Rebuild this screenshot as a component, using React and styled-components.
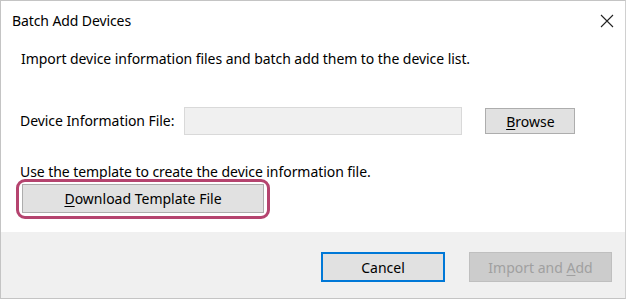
import React from 'react';
import styled, { createGlobalStyle } from 'styled-components';

const GlobalStyle = createGlobalStyle`
  body {
    margin: 0;
    background: #fff;
    font-family: "Noto Sans", "Open Sans", sans-serif;
    color: #000;
  }
`;

const Window = styled.div`
  width: 626px;
  height: 299px;
  box-sizing: border-box;
  border: 1px solid #c4c4c4;
  border-right-color: #d0d0d0;
  display: flex;
  flex-direction: column;
  background: #fff;
`;

const TitleBar = styled.div`
  height: 39px;
  display: flex;
  align-items: center;
  justify-content: space-between;
  padding: 0 10px 2px 11px;
`;

const Title = styled.div`
  font-size: 14px;
  letter-spacing: -0.1px;
`;

const CloseButton = styled.div`
  width: 14px;
  height: 14px;
  margin-right: 1px;
  display: flex;
`;

const Body = styled.div`
  flex: 1;
  display: flex;
  flex-direction: column;
  align-items: flex-start;
  padding: 7px 19px 0;
`;

const Text = styled.div`
  font-size: 14px;
  letter-spacing: -0.06px;
  line-height: ${p => p.$lh || 20}px;
  padding-left: ${p => p.$indent || 0}px;
`;

const FileRow = styled.div`
  display: flex;
  align-items: center;
  margin-top: 38px;
`;

const Input = styled.div`
  width: 276px;
  height: 26px;
  margin-left: 10px;
  background: #f0f0f0;
  border: 1px solid #d9d9d9;
`;

const Button = styled.div`
  box-sizing: border-box;
  width: ${p => p.$w}px;
  height: ${p => p.$h}px;
  display: flex;
  align-items: center;
  justify-content: center;
  font-size: 14px;
  background: ${p => (p.$disabled ? '#cccccc' : '#e1e1e1')};
  color: ${p => (p.$disabled ? '#a0a0a0' : '#000')};
  border: ${p =>
    p.$primary ? '2px solid #0078d7' : p.$disabled ? '1px solid #bfbfbf' : '1px solid #adadad'};

  u {
    text-decoration-thickness: 1px;
    text-underline-offset: 2px;
  }
`;

const BrowseButton = styled(Button)`
  margin-left: 23px;
`;

const Hint = styled(Text)`
  margin-top: 30px;
`;

const Highlight = styled.div`
  margin-left: -4px;
  padding: 2px 3px 3px;
  border: 3px solid #b5446f;
  border-radius: 9px;
`;

const Footer = styled.div`
  height: 66px;
  box-sizing: border-box;
  background: #f0f0f0;
  display: flex;
  justify-content: flex-end;
  align-items: flex-start;
  gap: 24px;
  padding: 20px 13px 0 0;
`;

export default function App() {
  return (
    <>
      <GlobalStyle />
      <Window>
        <TitleBar>
          <Title>Batch Add Devices</Title>
          <CloseButton>
            <svg width="14" height="14" viewBox="0 0 14 14">
              <path d="M1 1 L13 13 M13 1 L1 13" stroke="#222" strokeWidth="1.1" />
            </svg>
          </CloseButton>
        </TitleBar>
        <Body>
          <Text $indent={1}>Import device information files and batch add them to the device list.</Text>
          <FileRow>
            <Text>Device Information File:</Text>
            <Input />
            <BrowseButton $w={90} $h={26}>
              <span><u>B</u>rowse</span>
            </BrowseButton>
          </FileRow>
          <Hint $lh={14}>Use the template to create the device information file.</Hint>
          <Highlight>
            <Button $w={242} $h={29}>
              <span><u>D</u>ownload Template File</span>
            </Button>
          </Highlight>
        </Body>
        <Footer>
          <Button $w={124} $h={30} $primary>Cancel</Button>
          <Button $w={143} $h={30} $disabled>
            <span>Import and <u>A</u>dd</span>
          </Button>
        </Footer>
      </Window>
    </>
  );
}
